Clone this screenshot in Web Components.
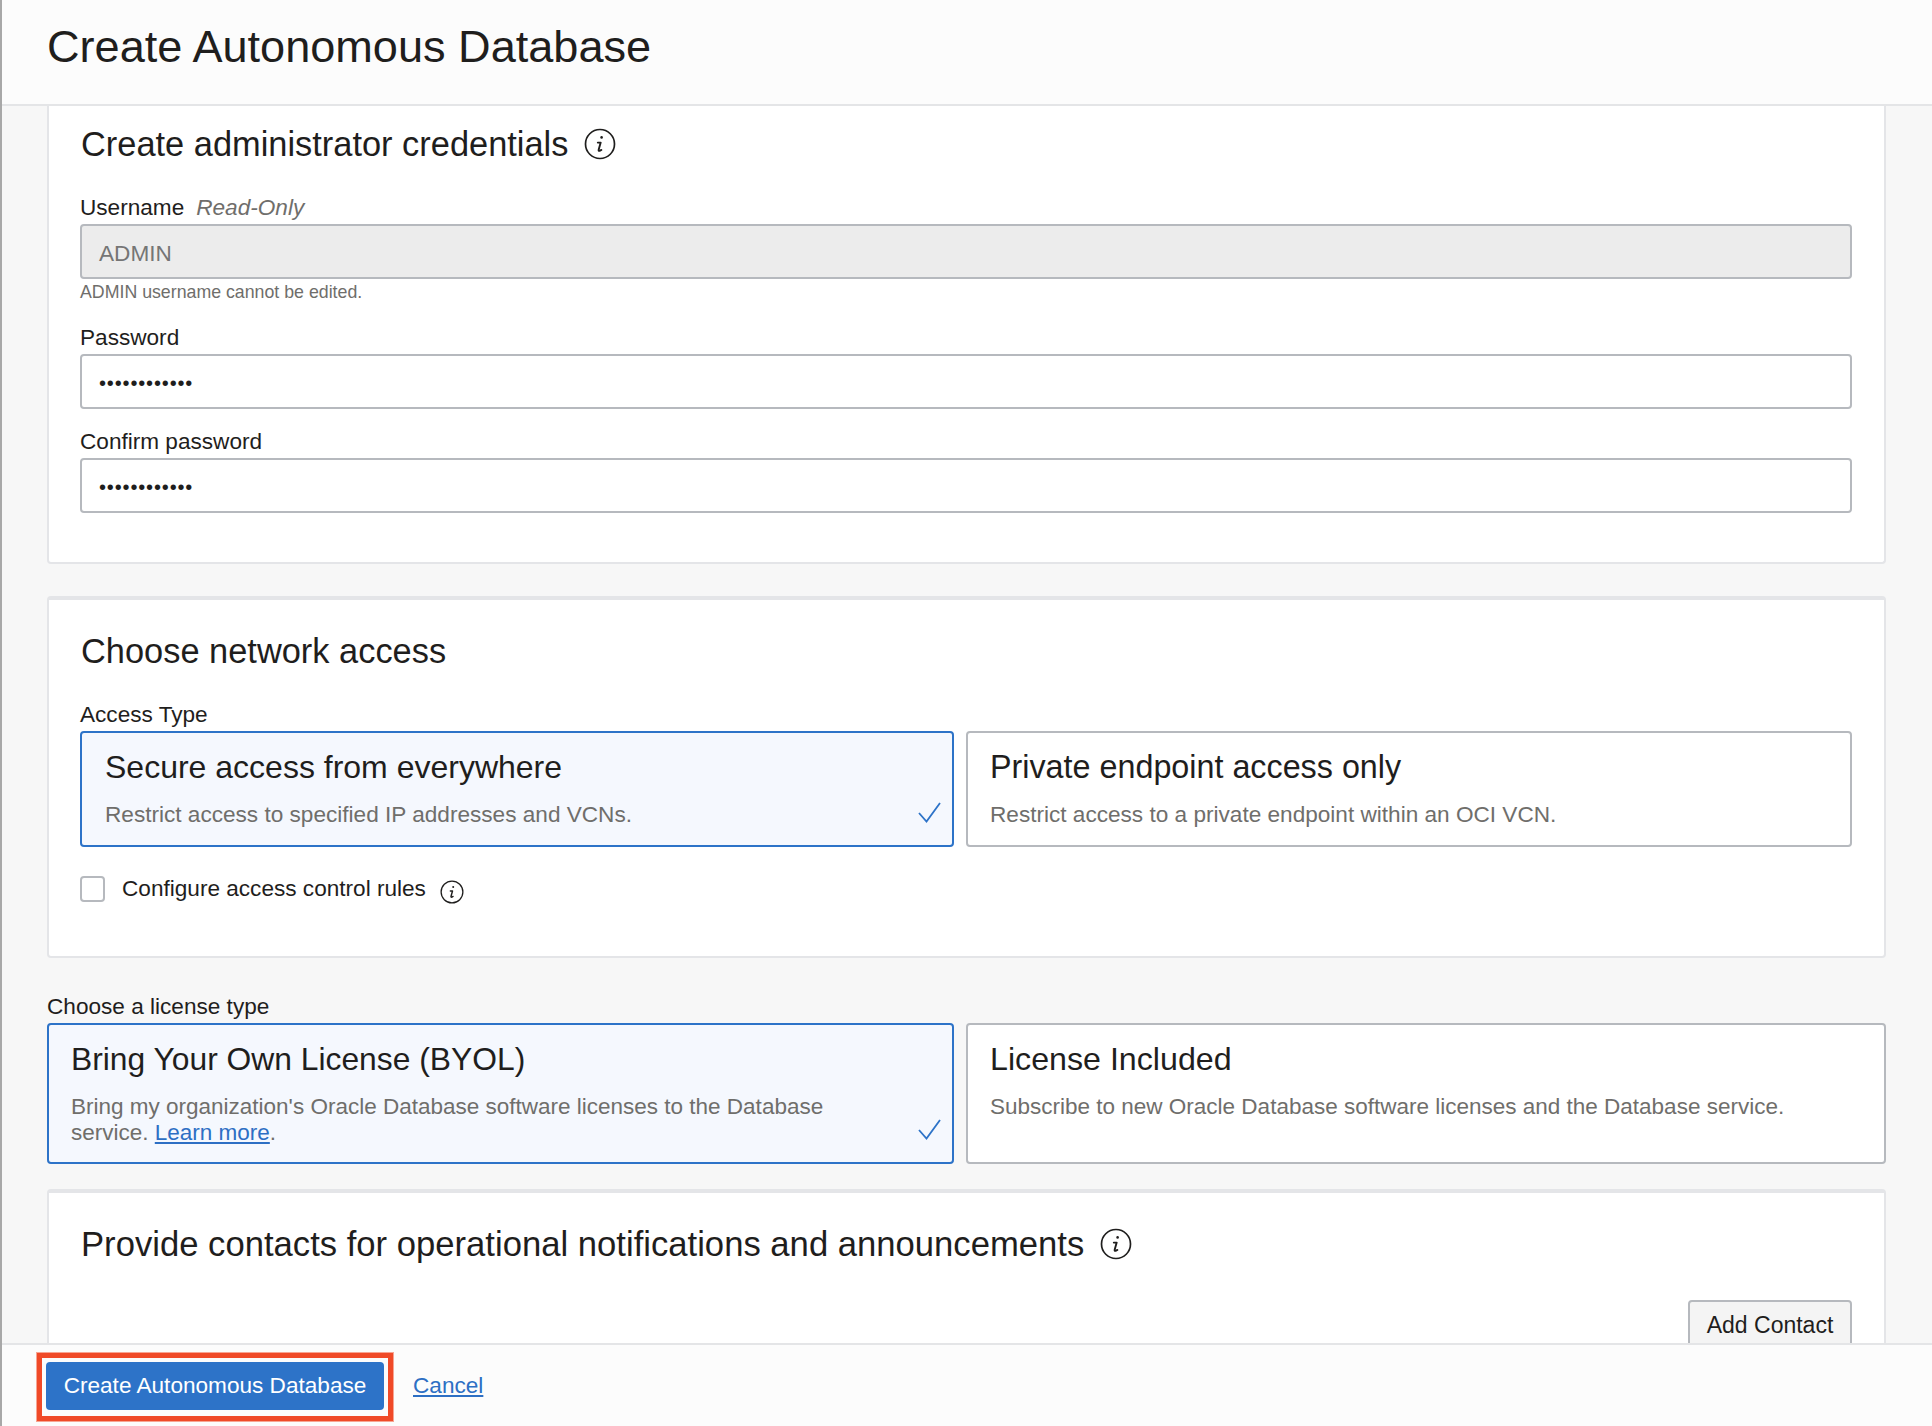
<!DOCTYPE html>
<html lang="en"><head><meta charset="utf-8"><title>Create Autonomous Database</title>
<style>
html,body{margin:0;height:100%;overflow:hidden;background:#f7f7f7}
body{font:22.6px/24px "Liberation Sans",Arial,sans-serif;color:#1f1e1d}
</style></head><body>
<app-shell>
  <div slot="title">Create Autonomous Database</div>

  <form-card flat>
    <card-heading info>Create administrator credentials</card-heading>
    <text-field label="Username" hint="Read-Only" value="ADMIN" help="ADMIN username cannot be edited." readonly style="margin-top:33px"></text-field>
    <text-field label="Password" value="••••••••••••" secret style="margin-top:24px"></text-field>
    <text-field label="Confirm password" value="••••••••••••" secret style="margin-top:21px"></text-field>
  </form-card>

  <form-card style="margin-top:32px;--pb:54px;--pt:32px">
    <card-heading>Choose network access</card-heading>
    <choice-group label="Access Type" columns="874px 1fr" style="margin-top:33px">
      <choice-tile selected heading="Secure access from everywhere" style="--h:116px;--tp:23px">Restrict access to specified IP addresses and VCNs.</choice-tile>
      <choice-tile heading="Private endpoint access only" style="--h:116px;--ts:32.3px;--tp:22px">Restrict access to a private endpoint within an OCI VCN.</choice-tile>
    </choice-group>
    <check-row>Configure access control rules</check-row>
  </form-card>

  <choice-group label="Choose a license type" columns="907px 1fr" style="margin-top:37px">
    <choice-tile selected heading="Bring Your Own License (BYOL)" style="--h:141px;--ts:31.8px;--ds:22.5px">Bring my organization's Oracle Database software licenses to the Database service. <a href="#" style="color:#2d6fc4">Learn more</a>.</choice-tile>
    <choice-tile heading="License Included" style="--h:141px;--ts:32.2px;--ds:22.5px">Subscribe to new Oracle Database software licenses and the Database service.</choice-tile>
  </choice-group>

  <form-card style="margin-top:25px;--pt:32px">
    <card-heading info style="font-size:34.65px">Provide contacts for operational notifications and announcements</card-heading>
    <div style="display:flex;justify-content:flex-end;margin-top:37px"><plain-button>Add Contact</plain-button></div>
  </form-card>

  <action-bar slot="footer" primary="Create Autonomous Database" link="Cancel"></action-bar>
</app-shell>

<script>
function comp(name, css, html){
  class C extends HTMLElement{
    constructor(){super();const r=this.attachShadow({mode:'open'});
      const a=n=>this.getAttribute(n);
      r.innerHTML='<style>'+css+'</style>'+(typeof html==='function'?html(a,this):html);}
  }
  customElements.define(name,C);
}
const infoSvg=s=>`<svg width="${s}" height="${s}" viewBox="0 0 32 32" fill="none" stroke="#1f1e1d" stroke-width="1.7" stroke-linecap="round" aria-hidden="true"><circle cx="16" cy="16" r="14.5"/><path d="M13.8 14.6h2.9l-2 7q-.4 1.7 1.2 1.2l1.5-.9" stroke-width="1.9" stroke-linejoin="round"/><circle cx="17.6" cy="9.4" r="1.3" fill="#1f1e1d" stroke="none"/></svg>`;

comp('app-shell',`
 :host{display:flex;flex-direction:column;height:1426px;box-sizing:border-box;border-left:2px solid #a8a8a8;background:#f7f7f7}
 header{flex:none;height:106px;box-sizing:border-box;padding:0 45px 10px;display:flex;align-items:center;background:#fcfcfc;border-bottom:2px solid #e4e5e7;font-size:45.1px;line-height:52px;color:#1f1e1d}
 main{flex:1;min-height:0;overflow:hidden;padding:0 46px 0 45px}
 footer{flex:none;height:83px}
`,`<header><slot name="title"></slot></header><main><slot></slot></main><footer><slot name="footer"></slot></footer>`);

comp('form-card',`
 :host{display:block;box-sizing:border-box;background:#fff;border:2px solid #e4e5e8;border-top-width:4px;border-radius:4px;padding:var(--pt,29px) 32px var(--pb,48px) 31px}
 :host([flat]){border-top:0;border-radius:0 0 4px 4px;padding-top:19px;padding-bottom:49px}
`,`<slot></slot>`);

comp('card-heading',`
 :host{display:flex;align-items:center;gap:16px;font-size:34.4px;line-height:38px;color:#1f1e1d;margin-left:1px}
 svg{flex:none}
`,(a)=>`<span><slot></slot></span>`+(a('info')!==null?infoSvg(32):''));

comp('text-field',`
 :host{display:block}
 .l{display:flex;gap:12px;height:24px;margin-bottom:4px;color:#1f1e1d}
 .h{font-style:italic;color:#6f6e6b}
 .b{box-sizing:border-box;height:55px;border:2px solid #b6b9be;border-radius:4px;background:#fff;padding:0 16px 0 17px;display:flex;align-items:center;color:#1f1e1d}
 :host([readonly]) .b{background:#ececec;color:#757575;padding-top:4px}
 :host([secret]) .b{font-size:20px;letter-spacing:.85px;padding-top:2px}
 .m{font-size:17.75px;line-height:20px;color:#6f6e6b;margin-top:3px}
`,(a)=>`<div class="l"><span>${a('label')}</span>${a('hint')?`<span class="h">${a('hint')}</span>`:''}</div><div class="b">${a('value')}</div>${a('help')?`<div class="m">${a('help')}</div>`:''}`);

comp('choice-group',`
 :host{display:block}
 .l{height:24px;margin-bottom:4px;color:#1f1e1d}
 .g{display:grid;gap:12px}
`,(a)=>`<div class="l">${a('label')}</div><div class="g" style="grid-template-columns:${a('columns')}"><slot></slot></div>`);

comp('choice-tile',`
 :host{display:block;position:relative;box-sizing:border-box;height:var(--h);border:2px solid #b6b9be;border-radius:4px;background:#fff;padding:14px 24px 0 var(--tp,22px);color:#6f6e6b}
 :host([selected]){border-color:#2d73c8;background:#f5f8fe}
 .t{font-size:var(--ts,32px);line-height:40px;color:#1f1e1d;margin-bottom:15px}
 .d{line-height:26px;font-size:var(--ds,22.6px)}
 :host([selected]) .d{padding-right:90px}
 svg{display:none;position:absolute;right:11px;bottom:22px}
 :host([selected]) svg{display:block}
`,(a)=>`<div class="t">${a('heading')}</div><div class="d"><slot></slot></div><svg width="23" height="21" viewBox="0 0 23 21" fill="none" stroke="#2d73c8" stroke-width="1.8"><path d="M1 11l7.5 8.5L22 1"/></svg>`);

comp('check-row',`
 :host{display:flex;align-items:center;margin-top:29px;height:26px;color:#1f1e1d}
 .c{box-sizing:border-box;width:25px;height:26px;border:2px solid #b6b9be;border-radius:4px;background:#fff;margin-right:17px}
 .i{margin-left:14px;margin-top:5px;display:inline-flex}
`,`<span class="c"></span><span><slot></slot></span><span class="i">${infoSvg(24)}</span>`);

comp('plain-button',`
 :host{display:inline-flex;box-sizing:border-box;height:56px;width:164px;padding-bottom:6px;justify-content:center;align-items:center;border:2px solid #b6b9be;border-radius:4px;background:#f4f4f4;color:#1f1e1d;font-size:23px}
`,`<slot></slot>`);

comp('action-bar',`
 :host{display:flex;align-items:center;box-sizing:border-box;height:83px;background:#fcfcfc;border-top:2px solid #e4e5e7;padding-left:34px;position:relative}
 .o{position:absolute;left:35px;top:8px;width:356px;height:68px;box-sizing:border-box;border:5px solid #f04a28;outline:1px solid #f7a593}
 button{all:unset;position:relative;box-sizing:border-box;height:48px;width:338px;margin:0 0 0 10px;background:#2d73c8;color:#fff;border-radius:4px;text-align:center;font:22.6px/48px "Liberation Sans",Arial,sans-serif}
 a{margin-left:29px;color:#2d6fc4}
`,(a)=>`<span class="o"></span><button type="button">${a('primary')}</button><a href="#">${a('link')}</a>`);
</script>
</body></html>
